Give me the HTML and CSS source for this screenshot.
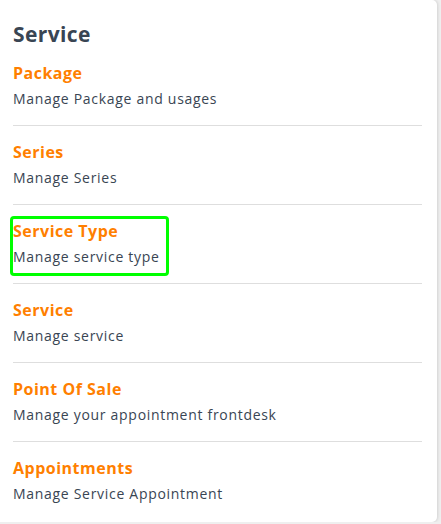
FILE: index.html
```html
<!DOCTYPE html>
<html lang="en">
<head>
<meta charset="utf-8">
<title>Service</title>
<link rel="stylesheet" href="styles.css">
</head>
<body>
<div class="card">
  <h2 class="heading">Service</h2>
  <ul class="list">
    <li class="item">
      <div class="item-body">
        <div class="item-title">Package</div>
        <div class="item-desc">Manage Package and usages</div>
      </div>
    </li>
    <li class="item">
      <div class="item-body">
        <div class="item-title">Series</div>
        <div class="item-desc">Manage Series</div>
      </div>
    </li>
    <li class="item">
      <div class="item-body highlight">
        <div class="item-title">Service Type</div>
        <div class="item-desc">Manage service type</div>
      </div>
    </li>
    <li class="item">
      <div class="item-body">
        <div class="item-title">Service</div>
        <div class="item-desc">Manage service</div>
      </div>
    </li>
    <li class="item">
      <div class="item-body">
        <div class="item-title">Point Of Sale</div>
        <div class="item-desc">Manage your appointment frontdesk</div>
      </div>
    </li>
    <li class="item">
      <div class="item-body">
        <div class="item-title">Appointments</div>
        <div class="item-desc">Manage Service Appointment</div>
      </div>
    </li>
  </ul>
</div>
</body>
</html>
```

FILE: styles.css
```css
html, body {
  margin: 0;
  padding: 0;
}
body {
  background: #efefef;
  font-family: "Open Sans", "Liberation Sans", sans-serif;
  color: #394553;
}
.card {
  width: 437px;
  height: 522px;
  box-sizing: border-box;
  background: #fff;
  border-radius: 0 5px 5px 0;
  box-shadow: 1px 0 3px rgba(0,0,0,0.12);
  padding: 19px 15px 0 13px;
}
.heading {
  margin: 0;
  font-size: 21px;
  line-height: 30px;
  font-weight: 700;
  letter-spacing: 0.4px;
  color: #394553;
}
.list {
  list-style: none;
  margin: 0;
  padding: 0;
}
.item {
  padding: 14px 0 15px;
  border-bottom: 1px solid #dedede;
}
.item:first-child {
  padding-top: 12px;
}
.item:last-child {
  border-bottom: none;
}
.item-body {
  display: inline-block;
  vertical-align: top;
}
.item-title {
  font-size: 16px;
  line-height: 24px;
  font-weight: 700;
  letter-spacing: 0.5px;
  color: #ff7f00;
}
.item-desc {
  margin-top: 3px;
  font-size: 14px;
  line-height: 22px;
  letter-spacing: 0.7px;
  color: #394553;
}
.highlight {
  outline: 3px solid #00ff00;
  padding: 0 6px 5px 0;
  margin-bottom: -5px;
  border-radius: 1px;
}
```
